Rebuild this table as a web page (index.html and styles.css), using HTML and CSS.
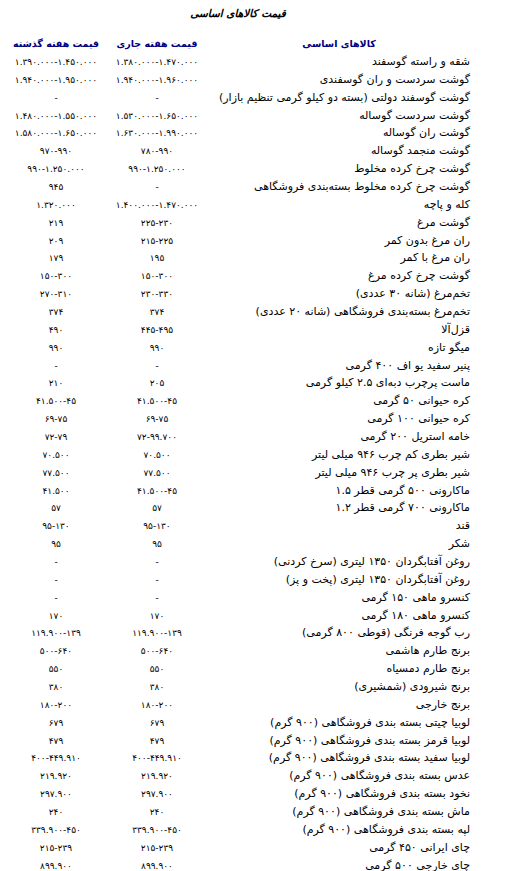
FILE: index.html
```html
<!DOCTYPE html>
<html lang="fa" dir="rtl">
<head>
<meta charset="utf-8">
<title>قیمت کالاهای اساسی</title>
<link rel="stylesheet" href="styles.css">
</head>
<body>
<div class="page">
  <h1 class="title">قیمت کالاهای اساسی</h1>
  <table class="prices">
    <colgroup><col class="c-name"><col class="c-now"><col class="c-prev"></colgroup>
    <thead>
      <tr><th class="h-name">کالاهای اساسی</th><th>قیمت هفته جاری</th><th>قیمت هفته گذشته</th></tr>
    </thead>
    <tbody>
      <tr><td>شقه و راسته گوسفند</td><td>۱.۳۸۰.۰۰۰-۱.۴۷۰.۰۰۰</td><td>۱.۳۹۰.۰۰۰-۱.۴۵۰.۰۰۰</td></tr>
      <tr><td>گوشت سردست و ران گوسفندی</td><td>۱.۹۴۰.۰۰۰-۱.۹۶۰.۰۰۰</td><td>۱.۹۴۰.۰۰۰-۱.۹۵۰.۰۰۰</td></tr>
      <tr><td>گوشت گوسفند دولتی (بسته دو کیلو گرمی تنظیم بازار)</td><td>-</td><td>-</td></tr>
      <tr><td>گوشت سردست گوساله</td><td>۱.۵۳۰.۰۰۰-۱.۶۵۰.۰۰۰</td><td>۱.۴۸۰.۰۰۰-۱.۵۵۰.۰۰۰</td></tr>
      <tr><td>گوشت ران گوساله</td><td>۱.۶۳۰.۰۰۰-۱.۹۹۰.۰۰۰</td><td>۱.۵۸۰.۰۰۰-۱.۶۵۰.۰۰۰</td></tr>
      <tr><td>گوشت منجمد گوساله</td><td>۷۸۰-۹۹۰</td><td>۹۷۰-۹۹۰</td></tr>
      <tr><td>گوشت چرخ کرده مخلوط</td><td>۹۹۰-۱.۲۵۰.۰۰۰</td><td>۹۹۰-۱.۲۵۰.۰۰۰</td></tr>
      <tr><td>گوشت چرخ کرده مخلوط بسته‌بندی فروشگاهی</td><td>-</td><td>۹۴۵</td></tr>
      <tr><td>کله و پاچه</td><td>۱.۴۰۰.۰۰۰-۱.۴۷۰.۰۰۰</td><td>۱.۳۲۰.۰۰۰</td></tr>
      <tr><td>گوشت مرغ</td><td>۲۲۵-۲۳۰</td><td>۲۱۹</td></tr>
      <tr><td>ران مرغ بدون کمر</td><td>۲۱۵-۲۲۵</td><td>۲۰۹</td></tr>
      <tr><td>ران مرغ با کمر</td><td>۱۹۵</td><td>۱۷۹</td></tr>
      <tr><td>گوشت چرخ کرده مرغ</td><td>۱۵۰-۳۰۰</td><td>۱۵۰-۳۰۰</td></tr>
      <tr><td>تخم‌مرغ (شانه ۳۰ عددی)</td><td>۲۳۰-۳۳۰</td><td>۲۷۰-۳۱۰</td></tr>
      <tr><td>تخم‌مرغ بسته‌بندی فروشگاهی (شانه ۲۰ عددی)</td><td>۳۷۴</td><td>۳۷۴</td></tr>
      <tr><td>قزل‌آلا</td><td>۴۴۵-۴۹۵</td><td>۴۹۰</td></tr>
      <tr><td>میگو تازه</td><td>۹۹۰</td><td>۹۹۰</td></tr>
      <tr><td>پنیر سفید یو اف ۴۰۰ گرمی</td><td>-</td><td>-</td></tr>
      <tr><td>ماست پرچرب دبه‌ای ۲.۵ کیلو گرمی</td><td>۲۰۵</td><td>۲۱۰</td></tr>
      <tr><td>کره حیوانی ۵۰ گرمی</td><td>۴۱.۵۰۰-۴۵</td><td>۴۱.۵۰۰-۴۵</td></tr>
      <tr><td>کره حیوانی ۱۰۰ گرمی</td><td>۶۹-۷۵</td><td>۶۹-۷۵</td></tr>
      <tr><td>خامه استریل ۲۰۰ گرمی</td><td>۷۲-۹۹.۷۰۰</td><td>۷۲-۷۹</td></tr>
      <tr><td>شیر بطری کم چرب ۹۴۶ میلی لیتر</td><td>۷۰.۵۰۰</td><td>۷۰.۵۰۰</td></tr>
      <tr><td>شیر بطری پر چرب ۹۴۶ میلی لیتر</td><td>۷۷.۵۰۰</td><td>۷۷.۵۰۰</td></tr>
      <tr><td>ماکارونی ۵۰۰ گرمی قطر ۱.۵</td><td>۴۱.۵۰۰-۴۵</td><td>۴۱.۵۰۰</td></tr>
      <tr><td>ماکارونی ۷۰۰ گرمی قطر ۱.۲</td><td>۵۷</td><td>۵۷</td></tr>
      <tr><td>قند</td><td>۹۵-۱۳۰</td><td>۹۵-۱۳۰</td></tr>
      <tr><td>شکر</td><td>۹۵</td><td>۹۵</td></tr>
      <tr><td>روغن آفتابگردان ۱۳۵۰ لیتری (سرخ کردنی)</td><td>-</td><td>-</td></tr>
      <tr><td>روغن آفتابگردان ۱۳۵۰ لیتری (پخت و پز)</td><td>-</td><td>-</td></tr>
      <tr><td>کنسرو ماهی ۱۵۰ گرمی</td><td>-</td><td>-</td></tr>
      <tr><td>کنسرو ماهی ۱۸۰ گرمی</td><td>۱۷۰</td><td>۱۷۰</td></tr>
      <tr><td>رب گوجه فرنگی (قوطی ۸۰۰ گرمی)</td><td>۱۱۹.۹۰۰-۱۳۹</td><td>۱۱۹.۹۰۰-۱۳۹</td></tr>
      <tr><td>برنج طارم هاشمی</td><td>۵۰۰-۶۴۰</td><td>۵۰۰-۶۴۰</td></tr>
      <tr><td>برنج طارم دمسیاه</td><td>۵۵۰</td><td>۵۵۰</td></tr>
      <tr><td>برنج شیرودی (شمشیری)</td><td>۳۸۰</td><td>۳۸۰</td></tr>
      <tr><td>برنج خارجی</td><td>۱۸۰-۲۰۰</td><td>۱۸۰-۲۰۰</td></tr>
      <tr><td>لوبیا چیتی بسته بندی فروشگاهی (۹۰۰ گرم)</td><td>۶۷۹</td><td>۶۷۹</td></tr>
      <tr><td>لوبیا قرمز بسته بندی فروشگاهی (۹۰۰ گرم)</td><td>۴۷۹</td><td>۴۷۹</td></tr>
      <tr><td>لوبیا سفید بسته بندی فروشگاهی (۹۰۰ گرم)</td><td>۴۰۰-۴۴۹.۹۱۰</td><td>۴۰۰-۴۴۹.۹۱۰</td></tr>
      <tr><td>عدس بسته بندی فروشگاهی (۹۰۰ گرم)</td><td>۲۱۹.۹۲۰</td><td>۲۱۹.۹۲۰</td></tr>
      <tr><td>نخود بسته بندی فروشگاهی (۹۰۰ گرم)</td><td>۲۹۷.۹۰۰</td><td>۲۹۷.۹۰۰</td></tr>
      <tr><td>ماش بسته بندی فروشگاهی (۹۰۰ گرم)</td><td>۲۴۰</td><td>۲۴۰</td></tr>
      <tr><td>لپه بسته بندی فروشگاهی (۹۰۰ گرم)</td><td>۳۳۹.۹۰۰-۴۵۰</td><td>۳۳۹.۹۰۰-۴۵۰</td></tr>
      <tr><td>چای ایرانی ۴۵۰ گرمی</td><td>۲۱۵-۲۳۹</td><td>۲۱۵-۲۳۹</td></tr>
      <tr><td>چای خارجی ۵۰۰ گرمی</td><td>۸۹۹.۹۰۰</td><td>۸۹۹.۹۰۰</td></tr>
    </tbody>
  </table>
</div>
</body>
</html>
```

FILE: styles.css
```css
html, body {
  margin: 0;
  padding: 0;
  background: #fff;
}

body {
  font-family: "DejaVu Sans", sans-serif;
  font-size: 11px;
  color: #000;
}

.page {
  width: 464px;
  margin-left: 6px;
  margin-right: auto;
  padding-top: 4px;
}

.title {
  margin: 0 0 11px 0;
  font-size: 10.5px;
  line-height: 18px;
  font-weight: bold;
  font-style: italic;
  text-align: center;
  color: #000;
}

.prices {
  width: 464px;
  border-collapse: collapse;
  table-layout: fixed;
}

.c-name { width: 262px; }
.c-now { width: 102px; }
.c-prev { width: 100px; }

.prices th {
  height: 20px;
  padding: 0;
  font-size: 9.5px;
  font-weight: bold;
  color: #000080;
  text-align: center;
  vertical-align: middle;
}

.prices td {
  height: 17.87px;
  padding: 0;
  line-height: 14px;
  font-size: 9px;
  letter-spacing: -0.2px;
  text-align: center;
  vertical-align: middle;
  white-space: nowrap;
}

.prices td:first-child {
  font-size: 11px;
  letter-spacing: 0;
  text-align: right;
}
```
